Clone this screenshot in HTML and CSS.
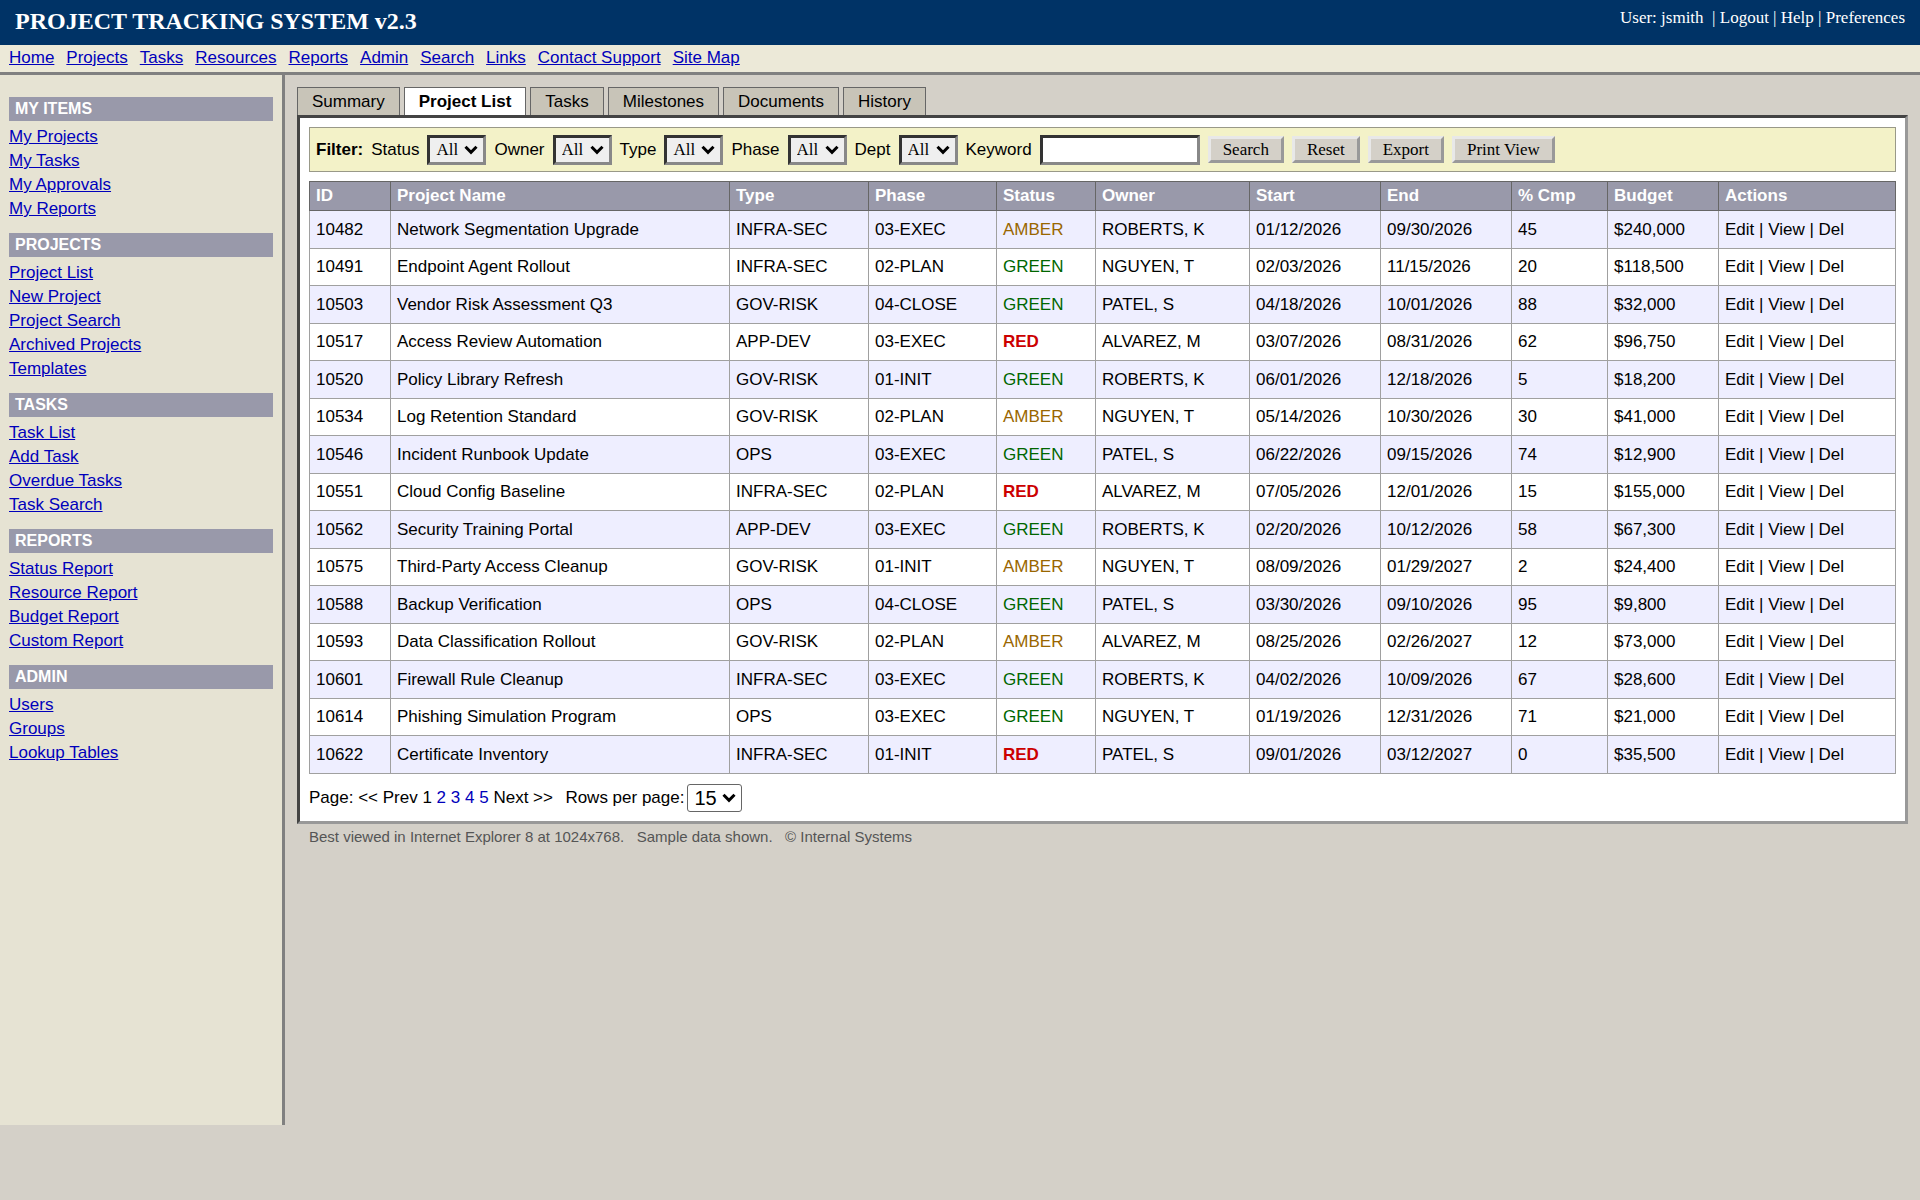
FILE: index.html
```html
<!DOCTYPE html>
<html lang="en">
<head>
<meta charset="utf-8">
<title>Project Tracking System v2.3</title>
<link rel="stylesheet" href="styles.css">
</head>
<body>
<header class="banner">
  <h1 class="banner-title">PROJECT TRACKING SYSTEM v2.3</h1>
  <div class="banner-user">User: jsmith &nbsp;| <a href="#">Logout</a> | <a href="#">Help</a> | <a href="#">Preferences</a></div>
</header>
<nav class="topnav">
  <a href="#">Home</a><a href="#">Projects</a><a href="#">Tasks</a><a href="#">Resources</a><a href="#">Reports</a><a href="#">Admin</a><a href="#">Search</a><a href="#">Links</a><a href="#">Contact Support</a><a href="#">Site Map</a>
</nav>
<div class="layout">
  <aside class="sidebar">
    <h2>MY ITEMS</h2>
    <ul><li><a href="#">My Projects</a></li><li><a href="#">My Tasks</a></li><li><a href="#">My Approvals</a></li><li><a href="#">My Reports</a></li></ul>
    <h2>PROJECTS</h2>
    <ul><li><a href="#">Project List</a></li><li><a href="#">New Project</a></li><li><a href="#">Project Search</a></li><li><a href="#">Archived Projects</a></li><li><a href="#">Templates</a></li></ul>
    <h2>TASKS</h2>
    <ul><li><a href="#">Task List</a></li><li><a href="#">Add Task</a></li><li><a href="#">Overdue Tasks</a></li><li><a href="#">Task Search</a></li></ul>
    <h2>REPORTS</h2>
    <ul><li><a href="#">Status Report</a></li><li><a href="#">Resource Report</a></li><li><a href="#">Budget Report</a></li><li><a href="#">Custom Report</a></li></ul>
    <h2>ADMIN</h2>
    <ul><li><a href="#">Users</a></li><li><a href="#">Groups</a></li><li><a href="#">Lookup Tables</a></li></ul>
  </aside>
  <main class="content">
    <div class="tabs">
      <button type="button" class="tab">Summary</button>
      <button type="button" class="tab tab-active">Project List</button>
      <button type="button" class="tab">Tasks</button>
      <button type="button" class="tab">Milestones</button>
      <button type="button" class="tab">Documents</button>
      <button type="button" class="tab">History</button>
    </div>
    <section class="panel">
      <form class="filter">
        <b>Filter:</b>
        <label for="f-status">Status</label><select id="f-status"><option>All</option></select>
        <label for="f-owner">Owner</label><select id="f-owner"><option>All</option></select>
        <label for="f-type">Type</label><select id="f-type"><option>All</option></select>
        <label for="f-phase">Phase</label><select id="f-phase"><option>All</option></select>
        <label for="f-dept">Dept</label><select id="f-dept"><option>All</option></select>
        <label for="f-keyword">Keyword</label><input id="f-keyword" type="text">
        <button type="button">Search</button>
        <button type="button">Reset</button>
        <button type="button">Export</button>
        <button type="button">Print View</button>
      </form>
      <table class="grid">
        <colgroup>
          <col class="c-id"><col><col class="c-type"><col class="c-phase"><col class="c-status"><col class="c-owner"><col class="c-date"><col class="c-date"><col class="c-cmp"><col class="c-budget"><col class="c-actions">
        </colgroup>
        <thead>
          <tr><th>ID</th><th>Project Name</th><th>Type</th><th>Phase</th><th>Status</th><th>Owner</th><th>Start</th><th>End</th><th>% Cmp</th><th>Budget</th><th>Actions</th></tr>
        </thead>
        <tbody>
          <tr><td>10482</td><td>Network Segmentation Upgrade</td><td>INFRA-SEC</td><td>03-EXEC</td><td class="amber">AMBER</td><td>ROBERTS, K</td><td>01/12/2026</td><td>09/30/2026</td><td>45</td><td>$240,000</td><td><a href="#">Edit</a> | <a href="#">View</a> | <a href="#">Del</a></td></tr>
          <tr><td>10491</td><td>Endpoint Agent Rollout</td><td>INFRA-SEC</td><td>02-PLAN</td><td class="green">GREEN</td><td>NGUYEN, T</td><td>02/03/2026</td><td>11/15/2026</td><td>20</td><td>$118,500</td><td><a href="#">Edit</a> | <a href="#">View</a> | <a href="#">Del</a></td></tr>
          <tr><td>10503</td><td>Vendor Risk Assessment Q3</td><td>GOV-RISK</td><td>04-CLOSE</td><td class="green">GREEN</td><td>PATEL, S</td><td>04/18/2026</td><td>10/01/2026</td><td>88</td><td>$32,000</td><td><a href="#">Edit</a> | <a href="#">View</a> | <a href="#">Del</a></td></tr>
          <tr><td>10517</td><td>Access Review Automation</td><td>APP-DEV</td><td>03-EXEC</td><td class="red">RED</td><td>ALVAREZ, M</td><td>03/07/2026</td><td>08/31/2026</td><td>62</td><td>$96,750</td><td><a href="#">Edit</a> | <a href="#">View</a> | <a href="#">Del</a></td></tr>
          <tr><td>10520</td><td>Policy Library Refresh</td><td>GOV-RISK</td><td>01-INIT</td><td class="green">GREEN</td><td>ROBERTS, K</td><td>06/01/2026</td><td>12/18/2026</td><td>5</td><td>$18,200</td><td><a href="#">Edit</a> | <a href="#">View</a> | <a href="#">Del</a></td></tr>
          <tr><td>10534</td><td>Log Retention Standard</td><td>GOV-RISK</td><td>02-PLAN</td><td class="amber">AMBER</td><td>NGUYEN, T</td><td>05/14/2026</td><td>10/30/2026</td><td>30</td><td>$41,000</td><td><a href="#">Edit</a> | <a href="#">View</a> | <a href="#">Del</a></td></tr>
          <tr><td>10546</td><td>Incident Runbook Update</td><td>OPS</td><td>03-EXEC</td><td class="green">GREEN</td><td>PATEL, S</td><td>06/22/2026</td><td>09/15/2026</td><td>74</td><td>$12,900</td><td><a href="#">Edit</a> | <a href="#">View</a> | <a href="#">Del</a></td></tr>
          <tr><td>10551</td><td>Cloud Config Baseline</td><td>INFRA-SEC</td><td>02-PLAN</td><td class="red">RED</td><td>ALVAREZ, M</td><td>07/05/2026</td><td>12/01/2026</td><td>15</td><td>$155,000</td><td><a href="#">Edit</a> | <a href="#">View</a> | <a href="#">Del</a></td></tr>
          <tr><td>10562</td><td>Security Training Portal</td><td>APP-DEV</td><td>03-EXEC</td><td class="green">GREEN</td><td>ROBERTS, K</td><td>02/20/2026</td><td>10/12/2026</td><td>58</td><td>$67,300</td><td><a href="#">Edit</a> | <a href="#">View</a> | <a href="#">Del</a></td></tr>
          <tr><td>10575</td><td>Third-Party Access Cleanup</td><td>GOV-RISK</td><td>01-INIT</td><td class="amber">AMBER</td><td>NGUYEN, T</td><td>08/09/2026</td><td>01/29/2027</td><td>2</td><td>$24,400</td><td><a href="#">Edit</a> | <a href="#">View</a> | <a href="#">Del</a></td></tr>
          <tr><td>10588</td><td>Backup Verification</td><td>OPS</td><td>04-CLOSE</td><td class="green">GREEN</td><td>PATEL, S</td><td>03/30/2026</td><td>09/10/2026</td><td>95</td><td>$9,800</td><td><a href="#">Edit</a> | <a href="#">View</a> | <a href="#">Del</a></td></tr>
          <tr><td>10593</td><td>Data Classification Rollout</td><td>GOV-RISK</td><td>02-PLAN</td><td class="amber">AMBER</td><td>ALVAREZ, M</td><td>08/25/2026</td><td>02/26/2027</td><td>12</td><td>$73,000</td><td><a href="#">Edit</a> | <a href="#">View</a> | <a href="#">Del</a></td></tr>
          <tr><td>10601</td><td>Firewall Rule Cleanup</td><td>INFRA-SEC</td><td>03-EXEC</td><td class="green">GREEN</td><td>ROBERTS, K</td><td>04/02/2026</td><td>10/09/2026</td><td>67</td><td>$28,600</td><td><a href="#">Edit</a> | <a href="#">View</a> | <a href="#">Del</a></td></tr>
          <tr><td>10614</td><td>Phishing Simulation Program</td><td>OPS</td><td>03-EXEC</td><td class="green">GREEN</td><td>NGUYEN, T</td><td>01/19/2026</td><td>12/31/2026</td><td>71</td><td>$21,000</td><td><a href="#">Edit</a> | <a href="#">View</a> | <a href="#">Del</a></td></tr>
          <tr><td>10622</td><td>Certificate Inventory</td><td>INFRA-SEC</td><td>01-INIT</td><td class="red">RED</td><td>PATEL, S</td><td>09/01/2026</td><td>03/12/2027</td><td>0</td><td>$35,500</td><td><a href="#">Edit</a> | <a href="#">View</a> | <a href="#">Del</a></td></tr>
        </tbody>
      </table>
      <div class="pager">
        <span>Page: &lt;&lt; Prev 1 <a href="#">2</a> <a href="#">3</a> <a href="#">4</a> <a href="#">5</a> Next &gt;&gt; &nbsp;</span>
        <label for="rows">Rows per page:</label>
        <select id="rows"><option>15</option></select>
      </div>
    </section>
    <footer class="footnote">Best viewed in Internet Explorer 8 at 1024x768. &nbsp; Sample data shown. &nbsp; © Internal Systems</footer>
  </main>
</div>
</body>
</html>
```
FILE: styles.css
```css
* {
  box-sizing: border-box;
}

body {
  margin: 0;
  background: #d4d0c8;
  color: #000;
  font: 17px/24px "Liberation Sans", Arial, sans-serif;
}

/* Header */
.banner {
  display: flex;
  justify-content: space-between;
  height: 45px;
  padding: 6px 15px;
  background: #003366;
  color: #fff;
  font-family: "Liberation Serif", "Times New Roman", serif;
}

.banner-title {
  margin: 0;
  font-size: 24px;
  line-height: 30px;
}

.banner-user a {
  color: inherit;
  text-decoration: none;
}

.topnav {
  display: flex;
  gap: 12px;
  height: 30px;
  padding: 1px 9px;
  background: #ece9d8;
  border-bottom: 3px solid #808080;
}

.topnav a,
.sidebar a {
  color: #0000bb;
}

/* Columns */
.layout {
  display: grid;
  grid-template-columns: 285px minmax(0, 1fr);
  align-items: start;
}

.sidebar {
  min-height: calc(100vh - 150px);
  padding: 10px 9px;
  background: #e6e3d3;
  border-right: 3px solid #808080;
}

.sidebar h2 {
  margin: 12px 0 4px;
  padding: 0 6px;
  background: #9999aa;
  color: #fff;
  font-size: 16px;
  line-height: 24px;
}

.sidebar ul {
  margin: 0;
  padding: 0;
  list-style: none;
}

.content {
  padding: 12px;
}

/* Tabs */
.tabs {
  display: flex;
  gap: 4px;
}

.tab {
  height: 28px;
  padding: 0 14px;
  border: 1px solid #666;
  border-bottom: 0;
  background: #c8c4b8;
  color: #000;
  font: inherit;
}

.tab-active {
  background: #fff;
  font-weight: bold;
}

/* Panel */
.panel {
  padding: 9px;
  background: #fff;
  border: 3px solid;
  border-color: #444 #999 #999 #444;
}

.filter {
  display: flex;
  align-items: center;
  gap: 8px;
  height: 45px;
  margin-bottom: 9px;
  padding: 0 6px;
  background: #f3f2c8;
  border: 1px solid #999988;
}

.filter select,
.filter input {
  height: 30px;
  border: 3px solid;
  border-color: #333 #888 #888 #333;
  border-radius: 0;
  font: 17px "Liberation Serif", "Times New Roman", serif;
}

/* Drop-downs share one heavy chevron */
select {
  appearance: none;
  color: #000;
  background: url("data:image/svg+xml,%3Csvg xmlns='http://www.w3.org/2000/svg' width='14' height='10' viewBox='0 0 14 10'%3E%3Cpath d='M1.5 1.8 7 7.3 12.5 1.8' fill='none' stroke='%23000' stroke-width='3'/%3E%3C/svg%3E") no-repeat right 5px center;
}

.filter select {
  width: 59px;
  padding: 0 0 0 6px;
  background-color: #efefef;
}

.filter input {
  width: 160px;
  background: #fff;
}

.filter button {
  height: 27px;
  padding: 0 12px;
  border: 3px solid;
  border-color: #e8e8e8 #999 #999 #e8e8e8;
  background: #d4d0c8;
  color: #000;
  font: 17px/20px "Liberation Serif", "Times New Roman", serif;
}

/* Project table */
.grid {
  width: 100%;
  table-layout: fixed;
  border-collapse: collapse;
}

.c-id { width: 81px; }
.c-type { width: 139px; }
.c-phase { width: 128px; }
.c-status { width: 99px; }
.c-owner { width: 154px; }
.c-date { width: 131px; }
.c-cmp { width: 96px; }
.c-budget { width: 111px; }
.c-actions { width: 177px; }

.grid th,
.grid td {
  padding: 0 6px;
  text-align: left;
  white-space: nowrap;
}

.grid th {
  height: 29px;
  background: #9999aa;
  border: 1px solid #666;
  color: #fff;
}

.grid td {
  height: 37px;
  border: 1px solid #a0a0a0;
}

.grid tbody tr:nth-child(odd) {
  background: #eeeeff;
}

.grid tbody tr:nth-child(odd) td {
  height: 38px;
}

.grid td a {
  color: inherit;
  text-decoration: none;
}

.grid .amber { color: #996600; }
.grid .green { color: #006600; }
.grid .red { color: #cc0000; font-weight: bold; }

/* Pager */
.pager {
  display: flex;
  align-items: center;
  gap: 3px;
  padding-top: 10px;
}

.pager a {
  color: #0000bb;
  text-decoration: none;
}

.pager select {
  width: 55px;
  height: 28px;
  padding: 0 0 0 6px;
  background-color: #fff;
  border: 1px solid #666;
  border-radius: 3px;
  font: 20px "Liberation Sans", Arial, sans-serif;
}

.footnote {
  padding: 1px 12px;
  color: #555;
  font-size: 15px;
}
```
